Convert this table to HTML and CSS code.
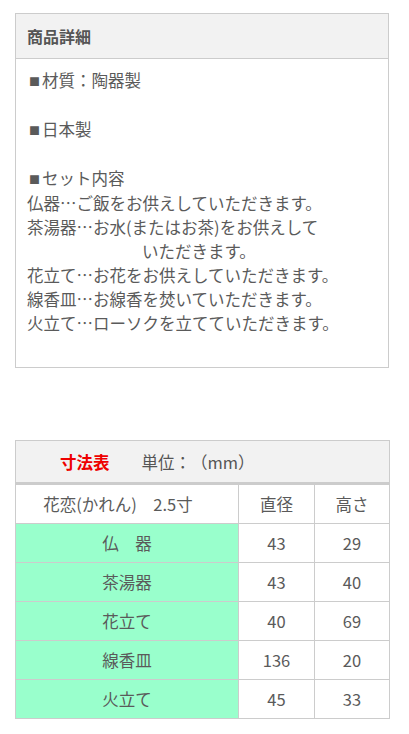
FILE: index.html
```html
<!DOCTYPE html>
<html lang="ja">
<head>
<meta charset="utf-8">
<link rel="stylesheet" href="styles.css">
</head>
<body>
<section class="detail">
  <h2 class="detail-head">商品詳細</h2>
  <div class="detail-body">
    <p><span class="sq">■</span>材質：陶器製</p>
    <p class="blank">&nbsp;</p>
    <p><span class="sq">■</span>日本製</p>
    <p class="blank">&nbsp;</p>
    <p><span class="sq">■</span>セット内容</p>
    <p>仏器…ご飯をお供えしていただきます。</p>
    <p>茶湯器…お水(またはお茶)をお供えして</p>
    <p class="indent">いただきます。</p>
    <p>花立て…お花をお供えしていただきます。</p>
    <p>線香皿…お線香を焚いていただきます。</p>
    <p>火立て…ローソクを立てていただきます。</p>
    <p class="blank">&nbsp;</p>
  </div>
</section>

<table class="size">
  <colgroup>
    <col class="c1">
    <col class="c2">
    <col class="c3">
  </colgroup>
  <thead>
    <tr><th colspan="3" class="size-title"><span class="red">寸法表</span><span class="unit">単位：（mm）</span></th></tr>
  </thead>
  <tbody>
    <tr><td class="first">花恋(かれん)　2.5寸</td><td>直径</td><td>高さ</td></tr>
    <tr><td class="green">仏　器</td><td>43</td><td>29</td></tr>
    <tr><td class="green">茶湯器</td><td>43</td><td>40</td></tr>
    <tr><td class="green">花立て</td><td>40</td><td>69</td></tr>
    <tr><td class="green">線香皿</td><td>136</td><td>20</td></tr>
    <tr><td class="green">火立て</td><td>45</td><td>33</td></tr>
  </tbody>
</table>
</body>
</html>
```

FILE: styles.css
```css
html, body {
  margin: 0;
  padding: 0;
  background: #fff;
}
body {
  padding: 13px 20px 0 15px;
  font-family: "Noto Sans CJK JP", "Noto Sans", sans-serif;
  color: #5a5a5a;
  font-size: 16.5px;
  text-spacing-trim: space-all;
}
.detail {
  border: 1px solid #ccc;
  width: 372px;
}
.detail-head {
  margin: 0;
  background: #f2f2f2;
  border-bottom: 1px solid #ccc;
  height: 44px;
  line-height: 44px;
  padding-left: 11px;
  font-size: 16px;
  font-weight: bold;
  color: #555;
}
.detail-body {
  padding: 9px 11px 8px 11px;
}
.detail-body p {
  margin: 0;
  line-height: 24px;
  white-space: nowrap;
}
.sq {
  display: inline-block;
  width: 15px;
  font-size: 11px;
  text-align: left;
  padding-left: 2px;
  box-sizing: border-box;
  vertical-align: 1px;
}
.indent {
  padding-left: 115px;
}
.size {
  margin-top: 72px;
  width: 374px;
  border-collapse: collapse;
  table-layout: fixed;
}
.c1 { width: 223px; }
.c2 { width: 76px; }
.c3 { width: 75px; }
.size th, .size td {
  border: 1px solid #ccc;
  padding: 0;
}
.size-title {
  background: #f2f2f2;
  height: 41px;
  text-align: left;
  font-weight: normal;
  border-bottom: 3px solid #ccc !important;
  padding-left: 44px !important;
}
.red {
  color: #e00;
  font-weight: bold;
}
.unit {
  margin-left: 32px;
  color: #555;
}
.size td {
  height: 38px;
  text-align: center;
}
.first {
  padding-right: 18px !important;
}
.green {
  background: #99ffcc;
}
```
